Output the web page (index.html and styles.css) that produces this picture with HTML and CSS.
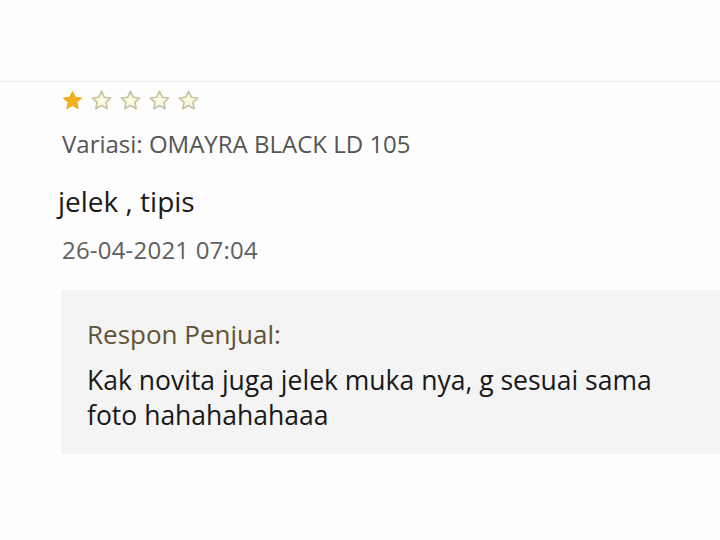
FILE: index.html
```html
<!DOCTYPE html>
<html>
<head>
<meta charset="utf-8">
<link rel="stylesheet" href="styles.css">
</head>
<body>
<div class="top"></div>
<div class="review">
  <div class="stars">
    <svg class="star" viewBox="0 0 24 24"><path class="on" d="M12 2.5l2.9 6.1 6.6.8-4.9 4.5 1.3 6.6L12 17.2l-5.9 3.3 1.3-6.6-4.9-4.5 6.6-.8z"/></svg>
    <svg class="star" viewBox="0 0 24 24"><path class="off" d="M12 2.5l2.9 6.1 6.6.8-4.9 4.5 1.3 6.6L12 17.2l-5.9 3.3 1.3-6.6-4.9-4.5 6.6-.8z"/></svg>
    <svg class="star" viewBox="0 0 24 24"><path class="off" d="M12 2.5l2.9 6.1 6.6.8-4.9 4.5 1.3 6.6L12 17.2l-5.9 3.3 1.3-6.6-4.9-4.5 6.6-.8z"/></svg>
    <svg class="star" viewBox="0 0 24 24"><path class="off" d="M12 2.5l2.9 6.1 6.6.8-4.9 4.5 1.3 6.6L12 17.2l-5.9 3.3 1.3-6.6-4.9-4.5 6.6-.8z"/></svg>
    <svg class="star" viewBox="0 0 24 24"><path class="off" d="M12 2.5l2.9 6.1 6.6.8-4.9 4.5 1.3 6.6L12 17.2l-5.9 3.3 1.3-6.6-4.9-4.5 6.6-.8z"/></svg>
  </div>
  <div class="variant">Variasi: OMAYRA BLACK LD 105</div>
  <div class="comment">jelek , tipis</div>
  <div class="date">26-04-2021 07:04</div>
  <div class="reply">
    <div class="reply-title">Respon Penjual:</div>
    <div class="reply-text">Kak novita juga jelek muka nya, g sesuai sama<br>foto hahahahahaaa</div>
  </div>
</div>
</body>
</html>
```

FILE: styles.css
```css
html, body {
  margin: 0;
  padding: 0;
  background: #fdfdfd;
  font-family: "Open Sans", "Noto Sans", sans-serif;
}
.top {
  height: 81px;
  border-bottom: 1px solid #ededed;
}
.review {
  padding-left: 61px;
}
.stars {
  display: flex;
  gap: 6px;
  padding-top: 7px;
  height: 23px;
}
.star {
  width: 23px;
  height: 23px;
}
.on {
  fill: #f2b21b;
  stroke: #e8a810;
  stroke-width: 1;
  stroke-linejoin: round;
}
.off {
  fill: #fbfae6;
  stroke: #c8c3a0;
  stroke-width: 1.8;
  stroke-linejoin: round;
}
.variant {
  margin-top: 16px;
  padding-left: 1px;
  font-size: 24px;
  line-height: 32px;
  color: #555;
}
.comment {
  margin-top: 23px;
  margin-left: -3px;
  font-size: 28px;
  line-height: 36px;
  color: #1a1a1a;
}
.date {
  margin-top: 15px;
  padding-left: 1px;
  font-size: 24px;
  line-height: 32px;
  letter-spacing: 0.2px;
  color: #606060;
}
.reply {
  margin-top: 24px;
  background: #f4f4f4;
  padding: 27px 20px 21px 26px;
}
.reply-title {
  font-size: 26px;
  line-height: 34px;
  color: #5f5333;
}
.reply-text {
  margin-top: 12px;
  font-size: 26.5px;
  line-height: 35px;
  color: #181818;
}
```
